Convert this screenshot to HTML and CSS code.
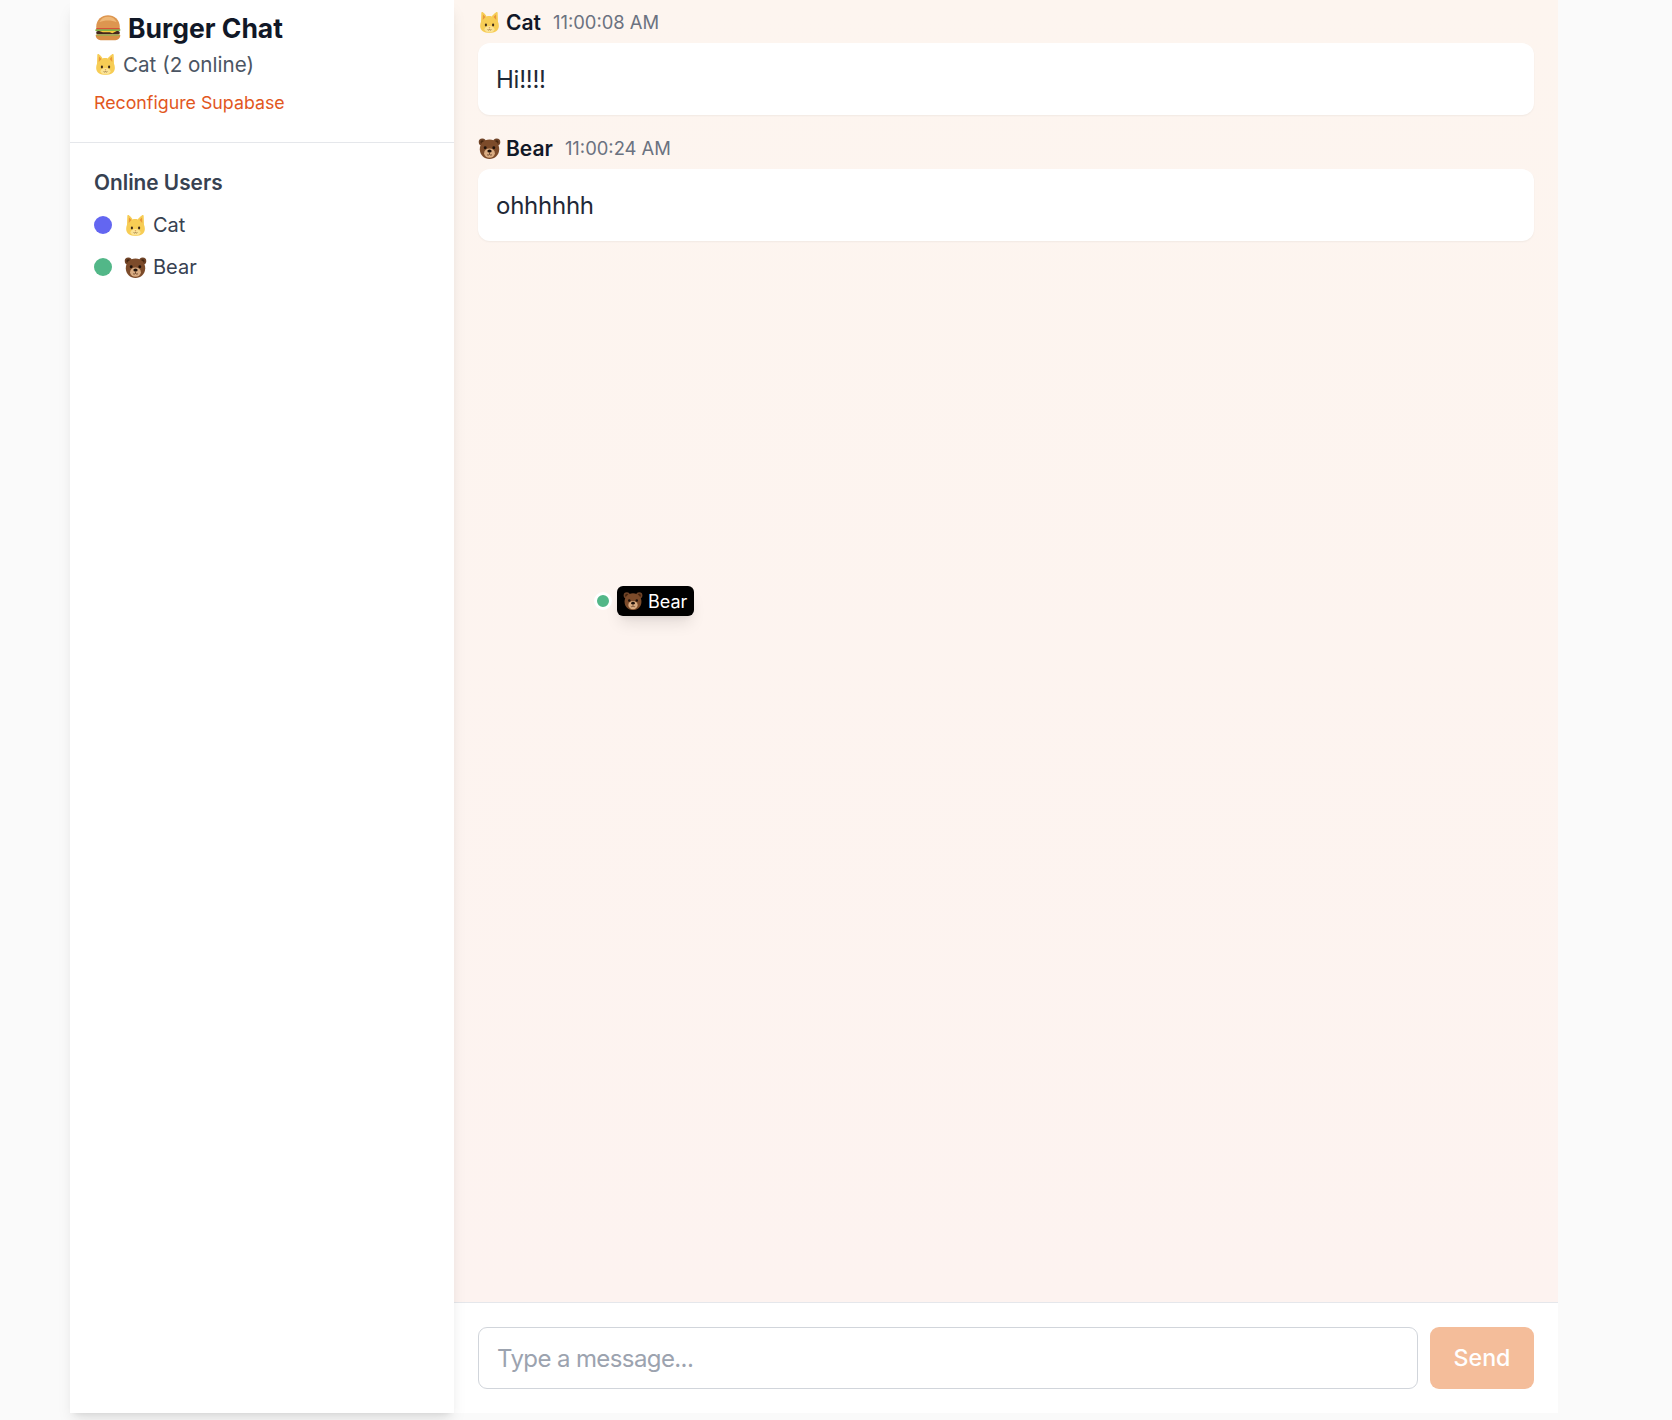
FILE: index.html
```html
<!DOCTYPE html>
<html lang="en">
<head>
<meta charset="utf-8">
<title>Burger Chat</title>
<link rel="stylesheet" href="styles.css">
</head>
<body>
<svg class="sprite" aria-hidden="true">
  <symbol id="burger" viewBox="0 0 32 32">
    <path d="M2.500 15C2.500 6.500 9 1.500 16 1.500S29.500 6.500 29.500 15c0 .6-.4 1-1 1h-25c-.6 0-1-.4-1-1z" fill="#dd9650"/>
    <path d="M6 9.500C8 5 11.500 3 16 3s8 2 10 6.500c-3-1.500-6.500-2.200-10-2.200S9 8 6 9.500z" fill="#efb877"/>
    <path d="M2.500 16h27v2.200H2.500z" fill="#d8503a"/>
    <path d="M2.200 17.500h27.600c.7 0 .7 1.700-.3 2-1.500.4-2.700-.3-4.500 0-1.800.3-3 .7-5 .3-2-.4-3-.4-5 0s-3.500.4-5 0-3-.6-4.500-.3c-1.600.3-3.500.2-3.800-.4-.4-.7-.2-1.600.5-1.600z" fill="#84b44c"/>
    <rect x="2.500" y="19.500" width="27" height="4" rx="2" fill="#43261b"/>
    <path d="M6 19.500h20l-5 2.600-3-1.300H10z" fill="#f7c93e"/>
    <path d="M3.200 23.500h25.600c.8 0 1.200.5 1.200 1.200 0 3-2.500 5.300-5.500 5.300h-17C4.500 30 2 27.700 2 24.700c0-.7.400-1.200 1.200-1.200z" fill="#d88e47"/>
    <path d="M3 23.500h26v1.200H3z" fill="#8cb850"/>
  </symbol>
  <symbol id="cat" viewBox="0 0 32 32">
    <path d="M6 1.500c-.9 0-1.400.7-1.400 1.600L4.200 15C3.400 17 3 18.800 3 20.800 3 27 8.500 30.500 16 30.500s13-3.500 13-9.700c0-2-.4-3.800-1.200-5.800l-.4-11.900c0-.9-.5-1.600-1.400-1.600-1 0-5 3.500-6.700 6-1.300-.3-2.500-.4-3.800-.4s-2.500.1-3.800.4C11 5 7 1.500 6 1.500z" fill="#f7cd55"/>
    <path d="M7 5l-.4 7.500 3.800-4.300zM25 5l.4 7.500-3.800-4.300z" fill="#e9973b"/>
    <ellipse cx="16" cy="25.500" rx="7" ry="4.500" fill="#fbe394"/>
    <ellipse cx="11" cy="19.500" rx="1.500" ry="2" fill="#3b2a1c"/>
    <ellipse cx="21" cy="19.500" rx="1.500" ry="2" fill="#3b2a1c"/>
    <path d="M14.800 23h2.400L16 24.400z" fill="#c9683a"/>
    <path d="M13.300 25.800c1 .9 2.100.9 2.700-.2.600 1.100 1.700 1.100 2.700.2" fill="none" stroke="#6b4423" stroke-width=".8"/>
  </symbol>
  <symbol id="bear" viewBox="0 0 32 32">
    <circle cx="6" cy="7" r="5" fill="#6f4327"/>
    <circle cx="26" cy="7" r="5" fill="#6f4327"/>
    <circle cx="6" cy="7" r="2.600" fill="#44250f"/>
    <circle cx="26" cy="7" r="2.600" fill="#44250f"/>
    <path d="M16 3.500C7.500 3.500 2.500 9.500 2.500 17c0 8 6 13.500 13.500 13.500S29.500 25 29.500 17C29.500 9.500 24.500 3.500 16 3.500z" fill="#7c4b2a"/>
    <ellipse cx="16" cy="22.500" rx="7.500" ry="6.500" fill="#d9ac82"/>
    <circle cx="10" cy="15" r="2" fill="#1f120b"/>
    <circle cx="22" cy="15" r="2" fill="#1f120b"/>
    <ellipse cx="16" cy="19.500" rx="3" ry="2.200" fill="#1f120b"/>
    <path d="M16 21.500v2.500M12.500 24.500c1.500 1 2.500 1 3.500-.5 1 1.500 2 1.500 3.500.5" fill="none" stroke="#4c2a16" stroke-width="1"/>
  </symbol>
</svg>

<main class="app">
  <aside class="sidebar">
    <header class="side-head">
      <h1 class="title"><svg class="emoji emoji-burger"><use href="#burger"/></svg><span>Burger Chat</span></h1>
      <p class="status"><svg class="emoji emoji-md"><use href="#cat"/></svg><span>Cat (2 online)</span></p>
      <a class="reconfig" href="#">Reconfigure Supabase</a>
    </header>
    <section class="users">
      <h2 class="users-title">Online Users</h2>
      <ul class="user-list">
        <li class="user"><i class="dot dot-indigo"></i><svg class="emoji emoji-md"><use href="#cat"/></svg><span>Cat</span></li>
        <li class="user"><i class="dot dot-green"></i><svg class="emoji emoji-md"><use href="#bear"/></svg><span>Bear</span></li>
      </ul>
    </section>
  </aside>

  <section class="chat">
    <div class="messages">
      <article class="message">
        <div class="meta"><svg class="emoji emoji-md"><use href="#cat"/></svg><b class="name">Cat</b><time class="time">11:00:08 AM</time></div>
        <div class="bubble">Hi!!!!</div>
      </article>
      <article class="message">
        <div class="meta"><svg class="emoji emoji-md"><use href="#bear"/></svg><b class="name">Bear</b><time class="time">11:00:24 AM</time></div>
        <div class="bubble">ohhhhhh</div>
      </article>
      <div class="cursor">
        <i class="cursor-dot"></i>
        <span class="cursor-label"><svg class="emoji emoji-sm"><use href="#bear"/></svg>Bear</span>
      </div>
    </div>
    <form class="composer">
      <input class="field" type="text" placeholder="Type a message...">
      <button class="send" type="button">Send</button>
    </form>
  </section>
</main>
</body>
</html>
```
FILE: styles.css
```css
* { box-sizing: border-box; }
html, body { margin: 0; height: 1420px; overflow: hidden; }
body {
  background: #fafafa;
  font-family: Inter, "Liberation Sans", sans-serif;
  color: #111827;
}
.sprite { display: none; }
.emoji { display: block; flex: none; }
.emoji-burger { width: 28px; height: 28px; }
.emoji-md { width: 23px; height: 23px; }
.emoji-sm { width: 20px; height: 20px; }

.app {
  display: flex;
  width: 1488px;
  height: 1413px;
  margin-left: 70px;
  background: #fff;
}
.sidebar {
  position: relative;
  z-index: 1;
  flex: none;
  width: 384px;
  background: #fff;
  box-shadow: 0 10px 15px -3px rgba(0,0,0,.1), 0 4px 6px -4px rgba(0,0,0,.1);
}
.side-head {
  height: 143px;
  padding: 12px 24px 0;
  border-bottom: 1px solid #e5e7eb;
}
.title {
  display: flex;
  align-items: center;
  gap: 6px;
  margin: 0;
  height: 32px;
  font-size: 26.500px;
  font-weight: 700;
  line-height: 32px;
  color: #111827;
}
.status {
  display: flex;
  align-items: center;
  gap: 6px;
  margin: 5px 0 0;
  height: 30px;
  font-size: 20.600px;
  color: #4b5563;
}
.reconfig {
  display: block;
  margin-top: 11px;
  font-size: 17.800px;
  line-height: 26px;
  color: #e2571e;
  text-decoration: none;
}
.users { padding: 26px 24px 0; }
.users-title {
  margin: 0;
  font-size: 20.800px;
  font-weight: 600;
  line-height: 28px;
  color: #374151;
}
.user-list { list-style: none; margin: 7px 0 0; padding: 0; }
.user {
  display: flex;
  align-items: center;
  height: 42px;
  font-size: 20px;
  color: #374151;
}
.dot { width: 18px; height: 18px; border-radius: 50%; margin-right: 12px; }
.dot-indigo { background: #6366f1; }
.dot-green { background: #52b788; }
.user .emoji { margin-right: 6px; }

.chat {
  flex: 1;
  display: flex;
  flex-direction: column;
  min-width: 0;
}
.messages {
  position: relative;
  flex: 1;
  display: flex;
  flex-direction: column;
  gap: 19px;
  padding: 8px 24px 0;
  background: linear-gradient(180deg, #fdf5ef 0%, #fdf3f0 100%);
}
.meta {
  display: flex;
  align-items: center;
  height: 28px;
  margin-bottom: 7px;
}
.name {
  margin-left: 5px;
  font-size: 21px;
  font-weight: 600;
  color: #111827;
}
.time {
  margin-left: 12px;
  font-size: 18.400px;
  color: #6b7280;
}
.bubble {
  height: 72px;
  padding: 0 18px;
  border-radius: 12px;
  background: #fff;
  box-shadow: 0 1px 2px rgba(0,0,0,.05);
  font-size: 24px;
  letter-spacing: -.25px;
  line-height: 74px;
  color: #1f2937;
}
.cursor {
  position: absolute;
  left: 140px;
  top: 586px;
  display: flex;
  align-items: center;
  gap: 5px;
}
.cursor-dot {
  width: 18px;
  height: 18px;
  border-radius: 50%;
  background: #52b788;
  border: 3px solid #fff;
}
.cursor-label {
  display: flex;
  align-items: center;
  gap: 5px;
  height: 30px;
  padding: 0 7px 0 6px;
  border-radius: 6px;
  background: #000;
  color: #fff;
  font-size: 18px;
  box-shadow: 0 10px 15px -3px rgba(0,0,0,.1), 0 4px 6px -4px rgba(0,0,0,.1);
}
.composer {
  flex: none;
  display: flex;
  gap: 12px;
  height: 111px;
  padding: 24px;
  border-top: 1px solid #e5e7eb;
  background: #fff;
}
.field {
  flex: 1;
  min-width: 0;
  height: 62px;
  padding: 0 18px;
  border: 1px solid #d1d5db;
  border-radius: 9px;
  background: #fff;
  font: 24px Inter, "Liberation Sans", sans-serif;
  letter-spacing: -.6px;
  color: #111827;
}
.field::placeholder { color: #9ca3af; opacity: 1; }
.send {
  flex: none;
  width: 104px;
  height: 62px;
  border: 0;
  border-radius: 9px;
  background: #f4bd9a;
  color: #fff;
  font: 500 23.200px Inter, "Liberation Sans", sans-serif;
}
```
